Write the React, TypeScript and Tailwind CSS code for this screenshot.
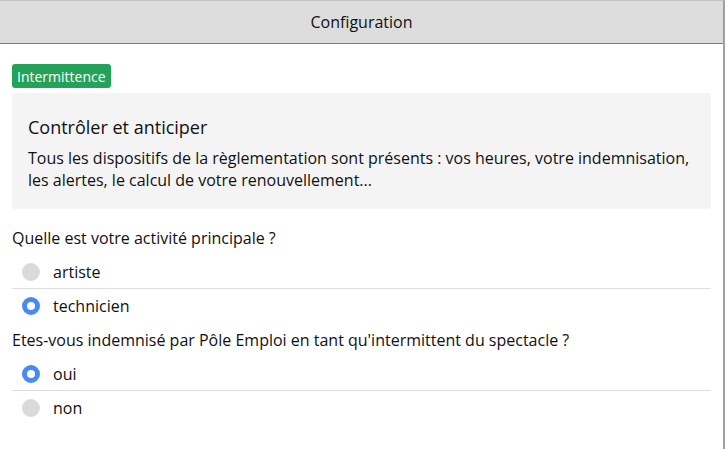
import React from 'react';

interface Option {
  label: string;
  checked: boolean;
}

function RadioList({ options }: { options: Option[] }) {
  return (
    <div>
      {options.map((opt, i) => (
        <div
          key={opt.label}
          className={`flex h-[34px] items-center gap-[13px] pl-[10px] ${i < options.length - 1 ? 'border-b border-[#dedede]' : ''}`}
        >
          {opt.checked ? (
            <span className="h-[18px] w-[18px] rounded-full border-[5px] border-[#4a89f3] bg-white" />
          ) : (
            <span className="h-[18px] w-[18px] rounded-full bg-[#dadada]" />
          )}
          <span className="text-[16px] text-[#111]">{opt.label}</span>
        </div>
      ))}
    </div>
  );
}

export default function App() {
  return (
    <div
      className="h-[449px] w-[725px] border-r-2 border-t border-r-[#a0a0a0] border-t-[#c4c4c4] bg-white"
      style={{ fontFamily: '"Open Sans", sans-serif' }}
    >
      {/* Header */}
      <div className="flex h-[43px] items-center justify-center border-b border-[#7c7c7c] bg-[#dddddd] text-[16px] text-[#111]">
        Configuration
      </div>

      <div className="pl-3 pr-[12px] pt-[20px]">
        <div className="flex h-[24px] w-fit items-center rounded-[3px] bg-[#25a25a] px-[5px] text-[14px] text-white">
          Intermittence
        </div>

        {/* Intro box */}
        <div className="mt-[5px] rounded-[3px] bg-[#f4f4f4] px-4 pb-[18px] pt-[20px] text-[#111]">
          <div className="text-[18px] leading-[28px]">Contrôler et anticiper</div>
          <p className="mt-[6px] text-[16px] leading-[22px]">
            Tous les dispositifs de la règlementation sont présents : vos heures, votre indemnisation,
            les alertes, le calcul de votre renouvellement...
          </p>
        </div>

        {/* Questions */}
        <div className="mt-[12px] flex h-[34px] items-center text-[16px] text-[#111]">
          Quelle est votre activité principale ?
        </div>
        <RadioList
          options={[
            { label: 'artiste', checked: false },
            { label: 'technicien', checked: true },
          ]}
        />

        <div className="flex h-[34px] items-center text-[16px] text-[#111]">
          Etes-vous indemnisé par Pôle Emploi en tant qu'intermittent du spectacle ?
        </div>
        <RadioList
          options={[
            { label: 'oui', checked: true },
            { label: 'non', checked: false },
          ]}
        />
      </div>
    </div>
  );
}
